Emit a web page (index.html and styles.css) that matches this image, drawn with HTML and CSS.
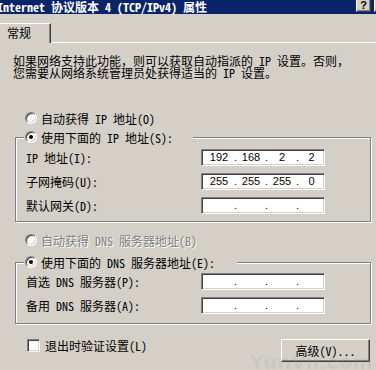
FILE: index.html
```html
<!DOCTYPE html>
<html lang="zh-CN">
<head>
  <meta charset="UTF-8" />
  <title>Internet 协议版本 4 (TCP/IPv4) 属性</title>
  <link rel="stylesheet" href="styles.css">
</head>
<body>

<div class="window">
  <div class="titlebar">
    <span class="title">Internet 协议版本 4 (TCP/IPv4) 属性</span>
    <span class="tbtn">?</span>
    <span class="tbtn tbtn-cut"></span>
  </div>

  <div class="tabs">
    <div class="tab">常规</div>
    <div class="tab-fill"></div>
  </div>

  <div class="panel">
    <p class="intro">如果网络支持此功能，则可以获取自动指派的 IP 设置。否则，<br>您需要从网络系统管理员处获得适当的 IP 设置。</p>

    <div class="radio-row ip-auto"><span class="radio"></span>自动获得 IP 地址(O)</div>

    <fieldset class="group group-ip">
      <legend><span class="radio checked"></span>使用下面的 IP 地址(S):</legend>
      <div class="field-row">
        <span class="label">IP 地址(I):</span>
        <div class="ipbox"><span>192</span><i>.</i><span>168</span><i>.</i><span>2</span><i>.</i><span>2</span></div>
      </div>
      <div class="field-row">
        <span class="label">子网掩码(U):</span>
        <div class="ipbox"><span>255</span><i>.</i><span>255</span><i>.</i><span>255</span><i>.</i><span>0</span></div>
      </div>
      <div class="field-row">
        <span class="label">默认网关(D):</span>
        <div class="ipbox"><span></span><i>.</i><span></span><i>.</i><span></span><i>.</i><span></span></div>
      </div>
    </fieldset>

    <div class="radio-row dns-auto disabled"><span class="radio"></span>自动获得 DNS 服务器地址(B)</div>

    <fieldset class="group group-dns">
      <legend><span class="radio checked"></span>使用下面的 DNS 服务器地址(E):</legend>
      <div class="field-row">
        <span class="label">首选 DNS 服务器(P):</span>
        <div class="ipbox"><span></span><i>.</i><span></span><i>.</i><span></span><i>.</i><span></span></div>
      </div>
      <div class="field-row">
        <span class="label">备用 DNS 服务器(A):</span>
        <div class="ipbox"><span></span><i>.</i><span></span><i>.</i><span></span><i>.</i><span></span></div>
      </div>
    </fieldset>

    <div class="bottom-row">
      <div class="check-row"><span class="checkbox"></span>退出时验证设置(L)</div>
      <button class="btn">高级(V)...</button>
    </div>
  </div>

  <div class="watermark">YunVii.com</div>
</div>

</body>
</html>
```

FILE: styles.css
```css
body {
  margin: 0;
  background: #D4D0C8;
  font-family: "Noto Sans Mono CJK SC", "Noto Sans CJK SC", "Liberation Mono", monospace;
  font-size: 12px;
  color: #000;
}

.window {
  position: relative;
  width: 376px;
  height: 370px;
  overflow: hidden;
  background: #D4D0C8;
}

/* title bar */
.titlebar {
  display: flex;
  align-items: flex-start;
  height: 14px;
  background: #0A246A;
}

.title {
  flex: 1;
  margin-left: -3px;
  color: #fff;
  font-weight: bold;
  line-height: 13px;
  white-space: nowrap;
}

.tbtn {
  width: 13px;
  height: 11px;
  margin-top: 0;
  background: #D4D0C8;
  border-top: 0;
  border-left: 1px solid #fff;
  border-right: 1px solid #404040;
  border-bottom: 1px solid #404040;
  box-shadow: inset -1px -1px 0 #808080;
  font-family: "Liberation Sans", sans-serif;
  font-weight: bold;
  font-size: 11px;
  line-height: 11px;
  text-align: center;
}

.tbtn-cut {
  margin-left: 3px;
  margin-right: -13px;
}

/* tabs */
.tabs {
  display: flex;
  height: 29px;
}

.tab {
  align-self: flex-end;
  width: 49px;
  height: 20px;
  padding-left: 7px;
  box-sizing: border-box;
  border-top: 1px solid #fff;
  border-right: 1px solid #404040;
  box-shadow: inset -1px 0 0 #808080;
  line-height: 18px;
  width: 51px;
}

.tab-fill {
  flex: 1;
  border-bottom: 1px solid #fff;
}

/* panel */
.panel {
  padding: 0;
}

.intro {
  margin: 12px 0 0 13px;
  line-height: 12px;
  white-space: nowrap;
}

.radio-row {
  display: flex;
  align-items: center;
  gap: 4px;
  height: 14px;
  padding-left: 25px;
  white-space: nowrap;
}

.ip-auto {
  margin-top: 32px;
}

.dns-auto {
  margin-top: 11px;
}

.disabled {
  color: #808080;
  text-shadow: 1px 1px 0 #fff;
}

.radio {
  position: relative;
  width: 12px;
  height: 12px;
  box-sizing: border-box;
  border-radius: 50%;
  background: #fff;
  border: 1px solid;
  border-color: #808080 #fff #fff #808080;
  box-shadow: inset 1px 1px 0 #404040, inset -1px -1px 0 #D4D0C8;
  flex: none;
}

.radio.checked::after {
  content: "";
  position: absolute;
  left: 3px;
  top: 3px;
  width: 4px;
  height: 4px;
  border-radius: 50%;
  background: #000;
}

/* group boxes */
.group {
  width: 356px;
  margin: 5px 0 0 15px;
  padding: 0 0 7px 0;
  box-sizing: border-box;
  border: 1px solid #808080;
  box-shadow: inset 1px 1px 0 #fff, 1px 1px 0 #fff;
}

.group legend {
  display: flex;
  align-items: center;
  gap: 4px;
  height: 14px;
  margin-left: 8px;
  padding: 0 20px 0 1px;
  background: #D4D0C8;
  white-space: nowrap;
}

.group-ip .field-row:first-of-type {
  margin-top: 5px;
}

.group-dns {
  margin-top: 8px;
  padding-bottom: 9px;
}

.group-dns legend {
  padding-right: 22px;
}

.group-dns .field-row:first-of-type {
  margin-top: 4px;
}

.field-row {
  display: flex;
  align-items: center;
  height: 17px;
  padding-left: 10px;
  margin-top: 7px;
  white-space: nowrap;
}

.label {
  width: 175px;
}

.ipbox {
  display: grid;
  grid-template-columns: 30px 3px 28px 3px 28px 3px 1fr;
  align-items: center;
  width: 124px;
  height: 17px;
  box-sizing: border-box;
  background: #fff;
  border: 1px solid;
  border-color: #808080 #fff #fff #808080;
  box-shadow: inset 1px 1px 0 #404040, inset -1px -1px 0 #D4D0C8;
  padding-left: 2px;
  font-family: "Liberation Sans", sans-serif;
  font-size: 11px;
  line-height: 15px;
}

.ipbox span {
  text-align: center;
}

.ipbox i {
  font-style: normal;
  text-align: center;
}

/* bottom row */
.bottom-row {
  display: flex;
  justify-content: space-between;
  align-items: flex-start;
  margin-top: 15px;
  padding: 0 6px 0 27px;
}

.check-row {
  display: flex;
  align-items: center;
  gap: 5px;
  height: 13px;
  white-space: nowrap;
}

.checkbox {
  width: 13px;
  height: 13px;
  box-sizing: border-box;
  background: #fff;
  border: 1px solid;
  border-color: #808080 #fff #fff #808080;
  box-shadow: inset 1px 1px 0 #404040, inset -1px -1px 0 #D4D0C8;
}

.btn {
  width: 89px;
  height: 23px;
  padding: 0;
  background: #D4D0C8;
  border: 1px solid;
  border-color: #fff #404040 #404040 #fff;
  box-shadow: inset -1px -1px 0 #808080;
  font-family: inherit;
  font-size: 12px;
  color: #000;
}

.watermark {
  position: absolute;
  left: 250px;
  top: 350px;
  font-family: "Liberation Sans", sans-serif;
  font-weight: bold;
  font-size: 21px;
  letter-spacing: 1px;
  color: rgba(150, 150, 160, 0.18);
}
```
